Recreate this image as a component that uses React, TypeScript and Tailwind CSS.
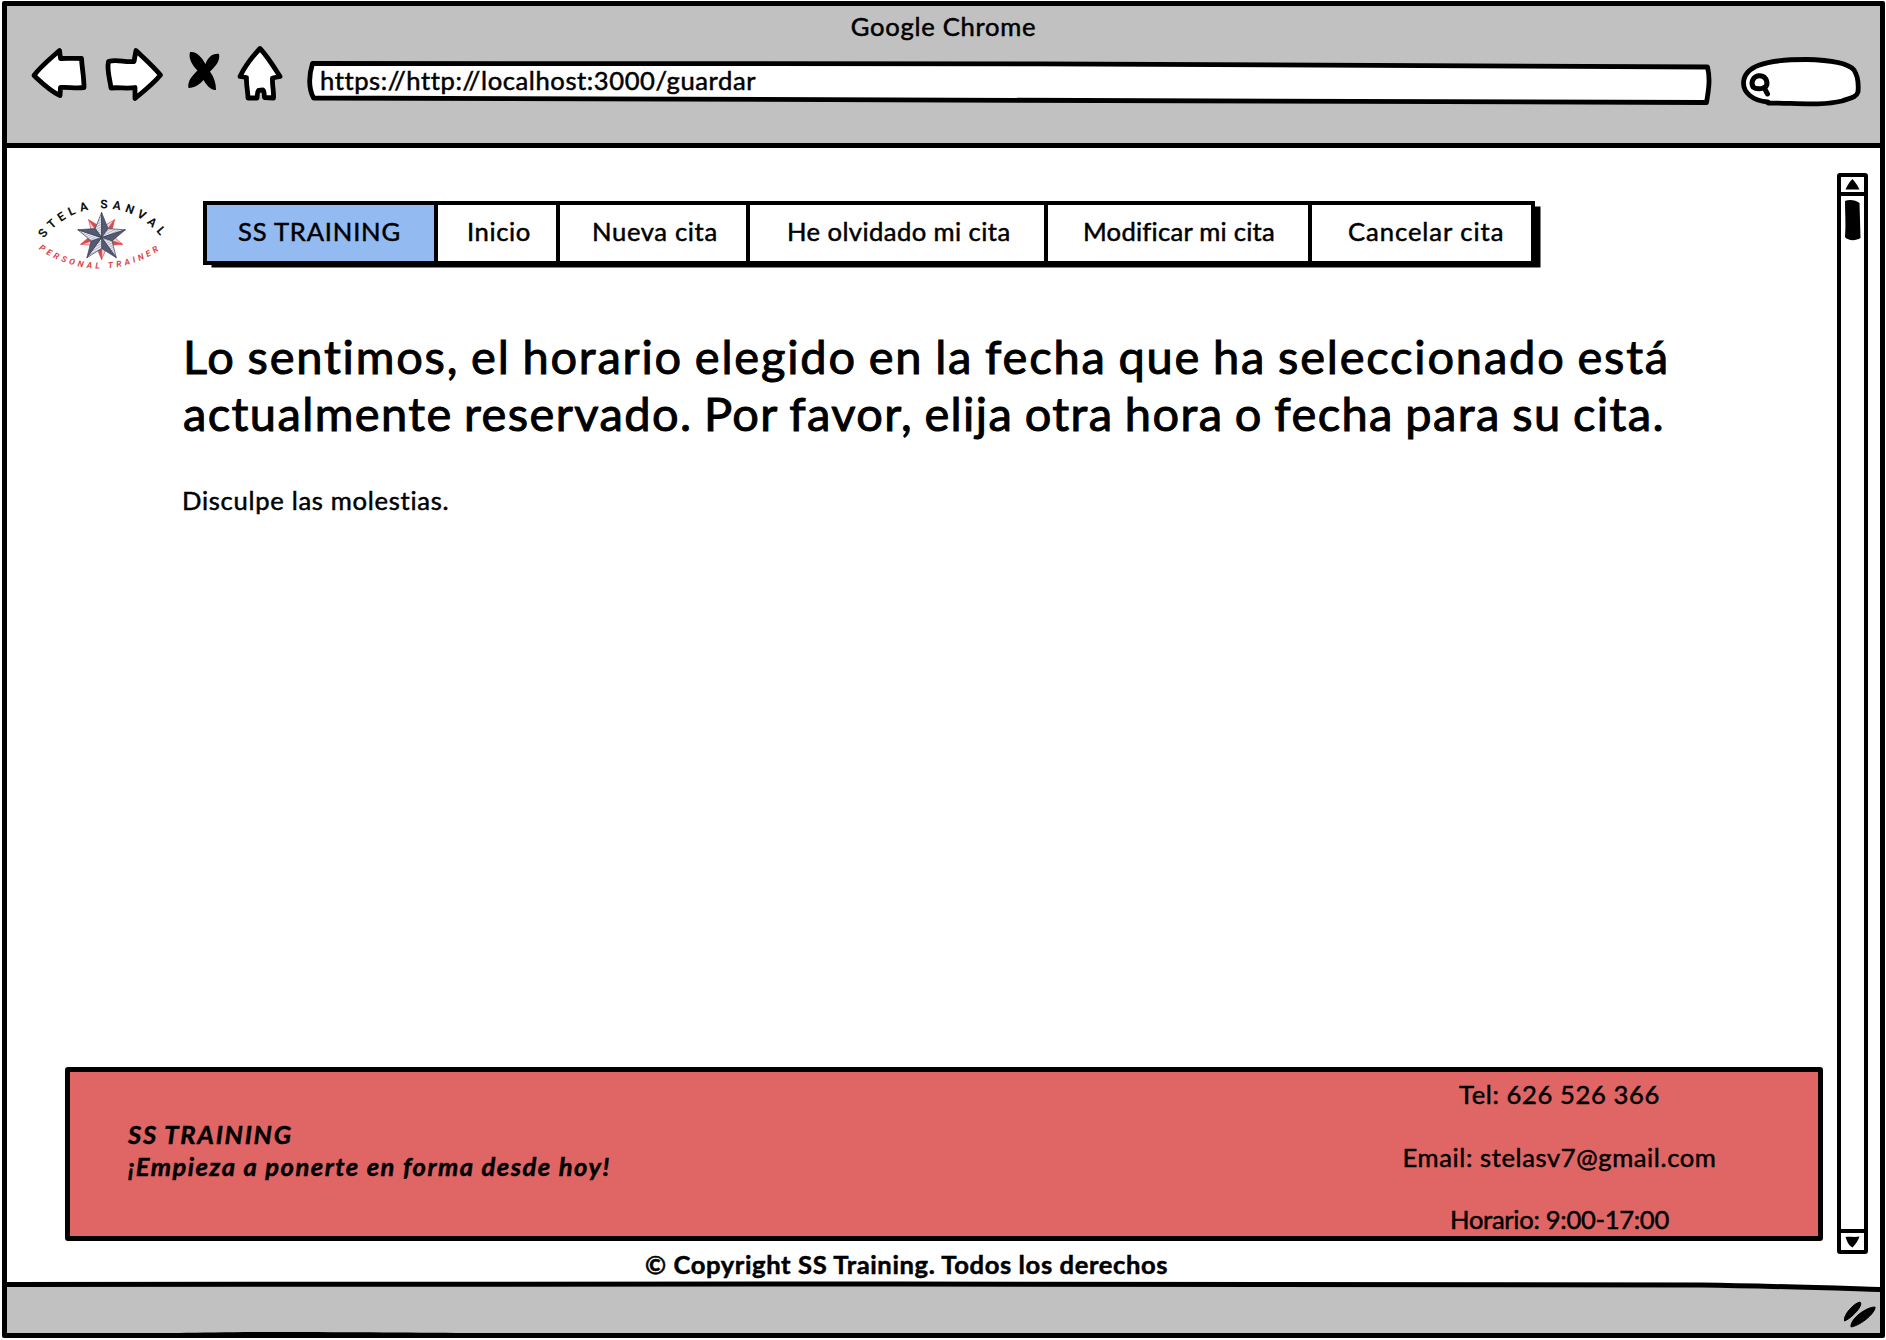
import type { ReactNode } from "react";

const INK = "#000";

/** Toolbar drawing: every one shares the same height so strokes keep a common baseline. */
function Sketch({ x, w, className = "", children }: { x: number; w: number; className?: string; children: ReactNode }) {
  return (
    <svg
      width={w}
      height={68}
      viewBox={`${x} 42 ${w} 68`}
      className={`block shrink-0 ${className}`}
      fill="#fff"
      stroke={INK}
      strokeWidth={4.8}
      strokeLinejoin="round"
      strokeLinecap="round"
    >
      {children}
    </svg>
  );
}

function Toolbar() {
  return (
    <div className="flex pl-[21px]">
      <Sketch x={28} w={62}>
        <path d="M34 75.5 C40 67 50 59 59.5 50.5 L60.5 58.5 C68 58 75 58.5 81.5 58.5 C82 68 84 77 84 87.5 C76 88.5 68 87 60.5 87.5 L60 95.5 C50 91 42 83 34 75.5 Z" />
      </Sketch>
      <Sketch x={102} w={64} className="ml-3">
        <path d="M108.5 61.5 C116 59 125 62.5 134 61.5 L136 50.5 C145 59 153 66 160.5 75 C153 84 144 91 135 98.5 L135 87.5 C127 89 119 87 111 88 C110 79 106.5 70 108.5 61.5 Z" />
      </Sketch>
      <Sketch x={184} w={40} className="ml-[18px]">
        <path
          fill={INK}
          stroke="none"
          d="M190 52 C197 51 202 58 205.5 64 C208 57 213 53 219 54 C220.5 61 215 67 210 71.5 C214 77 216 83 216 90 C210 90.5 206 84 203.5 80 C200 84 195 88 188.5 88 C187 81 193 75 197.5 70.5 C193 66 188 59 190 52 Z"
        />
      </Sketch>
      <Sketch x={236} w={50} className="ml-3">
        <path d="M260 48.5 C268 57 274 67 280 76.5 L272.5 78 C272 85 274 92 273.5 98 L264.5 97.5 C264 94 264.5 91 263 90 L258.5 90.5 C257 92 257.5 95 257 98 L248 98 C248 91 246 85 246.5 77.5 L240 76.5 C245 66 252 57 260 48.5 Z" />
      </Sketch>
      <div className="relative ml-[18px]">
        <Sketch x={304} w={1410}>
          <path d="M312.5 63.5 C700 62.5 1300 64 1707.5 67 C1710.5 79 1708.5 91 1706.5 102.5 C1200 103.5 700 99 313.5 98 C308.5 88 309 75 312.5 63.5 Z" />
        </Sketch>
        <span className="absolute top-[22px] left-[16px] leading-8 tracking-[0.58px]">
          https://http://localhost:3000/guardar
        </span>
      </div>
      <Sketch x={1740} w={124} className="ml-[26px]">
        <path d="M1768 102 C1752 101 1743.5 92 1743.5 83 C1744 67 1763 59.5 1806 59.5 C1832 60 1848 63 1854 70 C1858 76 1858.5 86 1858 92 C1856 98 1850 98 1842 101 C1822 106 1795 103 1768 103" />
        <path d="M1759 75.8 C1765 75.5 1767.5 80 1766.8 85 C1765 89 1757 90 1753 87 C1750.5 82 1753 76.5 1759 75.8 Z M1764 87.5 L1767.5 94" strokeWidth={5} />
      </Sketch>
    </div>
  );
}

function point(deg: number, r: number): [number, number] {
  const a = (deg * Math.PI) / 180;
  return [101.6 + r * Math.sin(a), 237.5 - r * Math.cos(a)];
}

interface StarProps {
  turn: number;
  r: number;
  inner: number;
  light: string;
  dark: string;
  line: string;
}

function Star({ turn, r, inner, light, dark, line }: StarProps) {
  return (
    <g stroke={line} strokeWidth={0.7} strokeLinejoin="round">
      {[0, 72, 144, 216, 288].map((a) => {
        const tip = point(a + turn, r);
        const left = point(a + turn - 36, inner);
        const right = point(a + turn + 36, inner);
        return (
          <g key={a}>
            <polygon points={`101.6,237.5 ${tip} ${left}`} fill={light} />
            <polygon points={`101.6,237.5 ${tip} ${right}`} fill={dark} />
          </g>
        );
      })}
    </g>
  );
}

function Logo() {
  return (
    <svg width={130} height={75} viewBox="36 196 130 75" className="block shrink-0 overflow-visible">
      <defs>
        <path id="arc-top" d="M44 238.5 A73 73 0 0 1 163.5 240.5" />
        <path id="arc-bottom" d="M38.5 249 A106 106 0 0 0 161 249" />
        <pattern id="hatch" width="1.6" height="1.6" patternUnits="userSpaceOnUse" patternTransform="rotate(20)">
          <rect width="1.6" height="1.6" fill="#f1f2f5" />
          <rect width="1.6" height="0.5" fill="#8b90a3" />
        </pattern>
      </defs>
      <Star turn={36} r={22} inner={10} light="#f6cfcf" dark="#d94b50" line="#d94b50" />
      <Star turn={0} r={25} inner={11} light="url(#hatch)" dark="#535a72" line="#3c4259" />
      <text className="font-[Roboto] text-[12px] font-bold" fill="#111">
        <textPath href="#arc-top" textLength={134} lengthAdjust="spacing">
          STELA SANVAL
        </textPath>
      </text>
      <text className="font-[Roboto] text-[8.5px] font-bold italic" fill="#d9474c">
        <textPath href="#arc-bottom" textLength={128} lengthAdjust="spacing">
          PERSONAL TRAINER
        </textPath>
      </text>
    </svg>
  );
}

function Nav() {
  return (
    <nav className="mt-[5px] ml-[37px] flex h-[64px] w-[1332px] border-4 border-black bg-white leading-8 shadow-[7px_4px_0_-1.5px_#000]">
      <a className="w-[231px] border-r-4 border-black bg-[#94baf2] pt-[10px] pl-[31px] tracking-[0.8px]">SS TRAINING</a>
      <a className="w-[122px] border-r-4 border-black pt-[10px] pl-[29px] tracking-[0.6px]">Inicio</a>
      <a className="w-[190px] border-r-4 border-black pt-[10px] pl-[32px] tracking-[0.65px]">Nueva cita</a>
      <a className="w-[298px] border-r-4 border-black pt-[10px] pl-[37px] tracking-[0.42px]">He olvidado mi cita</a>
      <a className="w-[264px] border-r-4 border-black pt-[10px] pl-[35px] tracking-[0.25px]">Modificar mi cita</a>
      <a className="flex-1 pt-[10px] pl-[36px] tracking-[0.95px]">Cancelar cita</a>
    </nav>
  );
}

function Footer() {
  return (
    <footer className="mt-auto ml-[58px] flex h-[174px] w-[1758px] justify-between rounded-[3px] border-[5px] border-black bg-[#e06666]">
      <div className="pt-[46px] pl-[58px] leading-8 font-bold italic">
        <p className="tracking-[1.7px]">SS TRAINING</p>
        <p className="tracking-[1.45px]">¡Empieza a ponerte en forma desde hoy!</p>
      </div>
      <div className="mr-[100px] flex w-[317px] flex-col items-center gap-[30.6px] pt-[6px] leading-8 whitespace-nowrap">
        <p className="tracking-[0.6px]">Tel: 626 526 366</p>
        <p className="tracking-[0.6px]">Email: stelasv7@gmail.com</p>
        <p className="tracking-[-0.3px]">Horario: 9:00-17:00</p>
      </div>
    </footer>
  );
}

function Scrollbar() {
  return (
    <div className="mt-[25px] mr-3 flex h-[1081px] w-[31px] shrink-0 flex-col rounded-[3px] border-4 border-black">
      <div className="flex h-[19px] shrink-0 items-center justify-center border-b-4 border-black">
        <svg width="15" height="11" viewBox="0 0 15 11">
          <path d="M7.5 0 C10 3 12.5 6 14.5 10.5 L0.5 10.5 C2 7 5 2 7.5 0 Z" />
        </svg>
      </div>
      <div className="flex flex-1 justify-center pt-[3px]">
        <svg width="17" height="42" viewBox="0 0 17 42">
          <path d="M1 2 C5 0 12 1 15.5 4 L16.5 39 C12 42 4 42 1 38 C2 26 1 14 1 2 Z" />
        </svg>
      </div>
      <div className="flex h-[21px] shrink-0 items-center justify-center border-t-4 border-black">
        <svg width="15" height="12" viewBox="0 0 15 12">
          <path d="M0.5 1 C5 0.5 10 1.5 14.5 0.5 C13 5 10 9 7.5 11.5 C3 9 2 5 0.5 1 Z" />
        </svg>
      </div>
    </div>
  );
}

function StatusBar() {
  return (
    <svg width="1873" height="52" viewBox="7 1281 1873 52" className="block shrink-0">
      <path d="M6 1284.5 C200 1287 500 1284 900 1284 C1200 1284 1500 1285 1701 1285 C1770 1286 1830 1288 1881 1289.5 V1334 H6 Z" fill="#c1c1c1" />
      <path d="M6 1284.5 C200 1287 500 1284 900 1284 C1200 1284 1500 1285 1701 1285 C1770 1286 1830 1288 1881 1289.5" fill="none" stroke={INK} strokeWidth={5} />
      <path d="M1844.5 1321 C1843 1315 1854 1303 1860 1302 C1864 1305 1852 1318 1844.5 1321 Z M1851 1327 C1850 1319 1866 1307 1875 1307 C1876 1312 1862 1325 1851 1327 Z" fill={INK} stroke={INK} strokeWidth={1} />
      <path d="M6 1334 C100 1335 150 1333 260 1332 C400 1332 500 1333.5 600 1334 Z" fill={INK} />
    </svg>
  );
}

export default function App() {
  return (
    <div className="h-[1340px] w-[1886px] overflow-hidden bg-white pt-px pr-px pb-[2px] pl-[2px] font-[Lato,sans-serif] text-[25.6px] text-black [-webkit-text-stroke:0.5px_#000]">
      <div className="flex h-full flex-col rounded-[2px] border-[5px] border-black">
        <header className="h-[142px] shrink-0 border-b-[5px] border-black bg-[#c1c1c1] pt-1">
          <p className="text-center leading-8 tracking-[0.7px]">Google Chrome</p>
          <Toolbar />
        </header>
        <div className="flex min-h-0 flex-1 justify-between">
          <main className="flex w-[1820px] flex-col pt-12">
            <div className="flex pl-[29px]">
              <div className="[-webkit-text-stroke:0px]">
                <Logo />
              </div>
              <Nav />
            </div>
            <h1 className="mt-[57px] ml-[176px] text-[47px] leading-[57px] whitespace-nowrap [-webkit-text-stroke:1px_#000]">
              <span className="block tracking-[1.8px] [word-spacing:-2px]">
                Lo sentimos, el horario elegido en la fecha que ha seleccionado está
              </span>
              <span className="block tracking-[1.4px] [word-spacing:-2px]">
                actualmente reservado. Por favor, elija otra hora o fecha para su cita.
              </span>
            </h1>
            <p className="mt-[42px] ml-[175px] leading-8 tracking-[0.7px]">Disculpe las molestias.</p>
            <Footer />
            <p className="mt-[7px] mb-px w-[1799px] text-center leading-8 font-bold tracking-[0.6px]">
              © Copyright SS Training. Todos los derechos
            </p>
          </main>
          <Scrollbar />
        </div>
        <StatusBar />
      </div>
    </div>
  );
}
